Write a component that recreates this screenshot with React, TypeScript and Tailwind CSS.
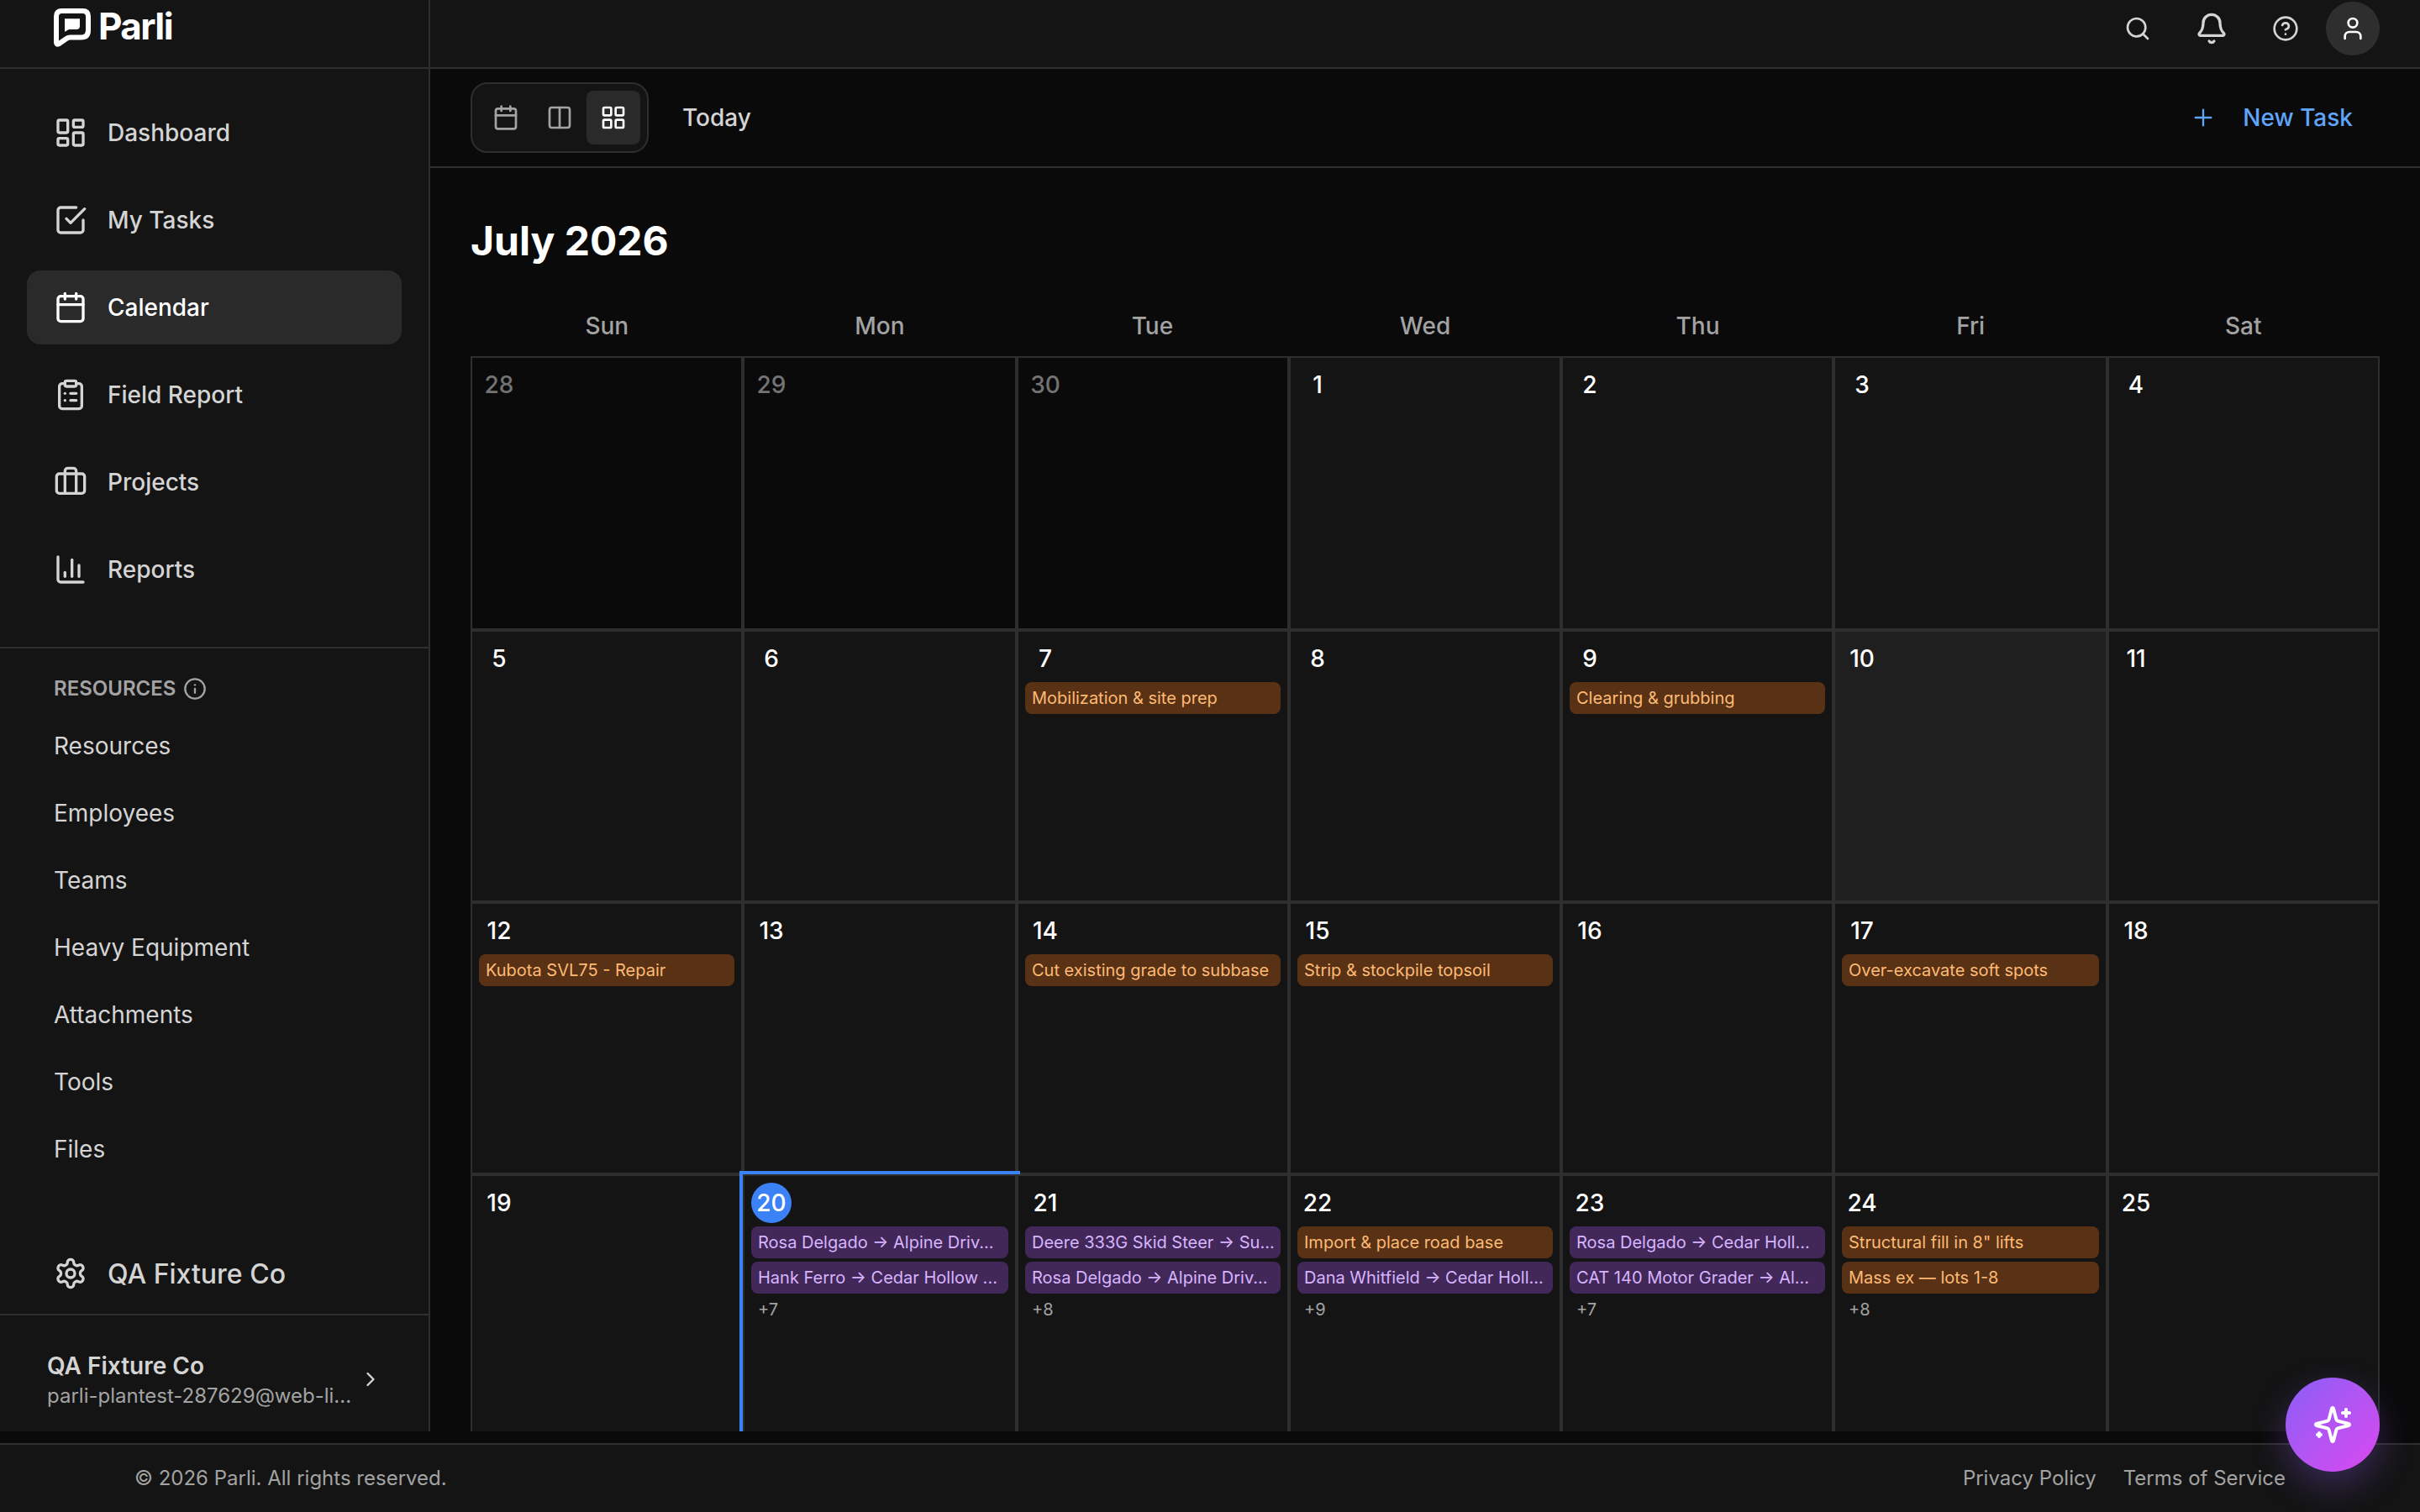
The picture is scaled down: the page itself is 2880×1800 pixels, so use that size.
import React from "react";
import {
  BarChart3,
  Bell,
  Calendar,
  ChevronRight,
  CircleHelp,
  ClipboardList,
  Columns2,
  Info,
  LayoutDashboard,
  LayoutGrid,
  Plus,
  Search,
  User,
} from "lucide-react";

type Tone = "orange" | "purple";
type Entry = { label: string; tone: Tone };
type Day = { n: number; outside?: boolean; hover?: boolean; today?: boolean; events?: Entry[]; more?: string };

const o = (label: string): Entry => ({ label, tone: "orange" });
const p = (label: string): Entry => ({ label, tone: "purple" });

const days: Day[] = [
  { n: 28, outside: true },
  { n: 29, outside: true },
  { n: 30, outside: true },
  { n: 1 },
  { n: 2 },
  { n: 3 },
  { n: 4 },
  { n: 5 },
  { n: 6 },
  { n: 7, events: [o("Mobilization & site prep")] },
  { n: 8 },
  { n: 9, events: [o("Clearing & grubbing")] },
  { n: 10, hover: true },
  { n: 11 },
  { n: 12, events: [o("Kubota SVL75 - Repair")] },
  { n: 13 },
  { n: 14, events: [o("Cut existing grade to subbase")] },
  { n: 15, events: [o("Strip & stockpile topsoil")] },
  { n: 16 },
  { n: 17, events: [o("Over-excavate soft spots")] },
  { n: 18 },
  { n: 19 },
  { n: 20, today: true, events: [p("Rosa Delgado → Alpine Driv..."), p("Hank Ferro → Cedar Hollow ...")], more: "+7" },
  { n: 21, events: [p("Deere 333G Skid Steer → Su..."), p("Rosa Delgado → Alpine Driv...")], more: "+8" },
  { n: 22, events: [o("Import & place road base"), p("Dana Whitfield → Cedar Holl...")], more: "+9" },
  { n: 23, events: [p("Rosa Delgado → Cedar Holl..."), p("CAT 140 Motor Grader → Al...")], more: "+7" },
  { n: 24, events: [o('Structural fill in 8" lifts'), o("Mass ex — lots 1-8")], more: "+8" },
  { n: 25 },
];

const weekdays = ["Sun", "Mon", "Tue", "Wed", "Thu", "Fri", "Sat"];

function TaskIcon() {
  return (
    <svg className="size-10" viewBox="0 0 24 24" fill="none" stroke="currentColor" strokeWidth="2" strokeLinecap="round" strokeLinejoin="round">
      <path d="m9 11 3 3L22 4" />
      <path d="M21 12v7a2 2 0 0 1-2 2H5a2 2 0 0 1-2-2V5a2 2 0 0 1 2-2h11" />
    </svg>
  );
}

function LuggageIcon() {
  return (
    <svg className="size-10" viewBox="0 0 24 24" fill="none" stroke="currentColor" strokeWidth="2" strokeLinecap="round" strokeLinejoin="round">
      <path d="M16 20V4a2 2 0 0 0-2-2h-4a2 2 0 0 0-2 2v16" />
      <rect width="20" height="14" x="2" y="6" rx="2" />
    </svg>
  );
}

function GearIcon() {
  return (
    <svg className="size-10" viewBox="0 0 24 24" fill="none" stroke="currentColor" strokeWidth="2" strokeLinecap="round" strokeLinejoin="round">
      <path d="M12.22 2h-.44a2 2 0 0 0-2 2v.18a2 2 0 0 1-1 1.73l-.43.25a2 2 0 0 1-2 0l-.15-.08a2 2 0 0 0-2.73.73l-.22.38a2 2 0 0 0 .73 2.73l.15.1a2 2 0 0 1 1 1.72v.51a2 2 0 0 1-1 1.74l-.15.09a2 2 0 0 0-.73 2.73l.22.38a2 2 0 0 0 2.73.73l.15-.08a2 2 0 0 1 2 0l.43.25a2 2 0 0 1 1 1.73V20a2 2 0 0 0 2 2h.44a2 2 0 0 0 2-2v-.18a2 2 0 0 1 1-1.73l.43-.25a2 2 0 0 1 2 0l.15.08a2 2 0 0 0 2.73-.73l.22-.39a2 2 0 0 0-.73-2.73l-.15-.08a2 2 0 0 1-1-1.74v-.5a2 2 0 0 1 1-1.74l.15-.09a2 2 0 0 0 .73-2.73l-.22-.38a2 2 0 0 0-2.73-.73l-.15.08a2 2 0 0 1-2 0l-.43-.25a2 2 0 0 1-1-1.73V4a2 2 0 0 0-2-2z" />
      <circle cx="12" cy="12" r="3" />
    </svg>
  );
}

function SparklesIcon() {
  return (
    <svg className="size-12" viewBox="0 0 24 24" fill="none" stroke="currentColor" strokeWidth="2" strokeLinecap="round" strokeLinejoin="round">
      <path d="M9.937 15.5A2 2 0 0 0 8.5 14.063l-6.135-1.582a.5.5 0 0 1 0-.962L8.5 9.936A2 2 0 0 0 9.937 8.5l1.582-6.135a.5.5 0 0 1 .963 0L14.063 8.5A2 2 0 0 0 15.5 9.937l6.135 1.581a.5.5 0 0 1 0 .964L15.5 14.063a2 2 0 0 0-1.437 1.437l-1.582 6.135a.5.5 0 0 1-.963 0z" />
      <path d="M20 3v4M22 5h-4M4 17v2M5 18H3" />
    </svg>
  );
}

function Logo() {
  return (
    <div className="flex items-start text-white">
      <svg className="h-[46px] w-11 shrink-0" viewBox="0 0 44 46" fill="none">
        <path d="M9.5 3H34.5Q41 3 41 9.5V26Q41 34.5 32.5 34.5H19.5Q17 34.5 15 36L6 42.3Q3 43.5 3 40.5V9.5Q3 3 9.5 3Z" stroke="currentColor" strokeWidth="6" strokeLinejoin="round" />
        <path d="M13 12.3H31V21Q31 25 27 25H19Q17.5 25 16.5 25.7L14 27.4Q13 27.8 13 26.8Z" fill="currentColor" />
      </svg>
      <span className="ml-[9px] mt-[-7px] text-[44px] leading-[56px] font-bold tracking-[-1.6px]">Parli</span>
    </div>
  );
}

const nav = [
  { label: "Dashboard", icon: <LayoutDashboard className="size-10" /> },
  { label: "My Tasks", icon: <TaskIcon /> },
  { label: "Calendar", icon: <Calendar className="size-10" />, active: true },
  { label: "Field Report", icon: <ClipboardList className="size-10" /> },
  { label: "Projects", icon: <LuggageIcon /> },
  { label: "Reports", icon: <BarChart3 className="size-10" /> },
];

const resources = ["Resources", "Employees", "Teams", "Heavy Equipment", "Attachments", "Tools", "Files"];

function Sidebar() {
  return (
    <aside className="flex w-[512px] shrink-0 flex-col border-r-2 border-[#2e2e2e] bg-[#141414] text-[#d4d4d4]">
      <div className="h-[82px] shrink-0 border-b-2 border-[#2e2e2e] pt-[10px] pl-16">
        <Logo />
      </div>
      <nav className="flex h-[690px] shrink-0 flex-col gap-4 border-b-2 border-[#2e2e2e] px-8 pt-8 text-[28px] font-medium">
        {nav.map((item) => (
          <a
            key={item.label}
            className={
              item.active
                ? "flex h-[88px] items-center gap-6 rounded-2xl bg-[#2a2a2a] px-8 text-white"
                : "flex h-[88px] items-center gap-6 rounded-2xl px-8"
            }
          >
            {item.icon}
            {item.label}
          </a>
        ))}
      </nav>
      <div className="flex h-24 shrink-0 items-center gap-[9px] pl-16 text-2xl font-semibold text-[#a3a3a3]">
        RESOURCES
        <Info className="size-7" />
      </div>
      <div className="-mt-5 flex flex-1 flex-col pl-16 text-[28px]">
        {resources.map((r) => (
          <a key={r} className="flex h-20 items-center">
            {r}
          </a>
        ))}
      </div>
      <div className="flex h-[98px] shrink-0 items-center gap-6 border-b-2 border-[#2e2e2e] pl-16 text-[32px] font-medium">
        <GearIcon />
        <span className="pt-[2px]">QA Fixture Co</span>
      </div>
      <div className="flex h-[138px] shrink-0 items-center pt-[14px] pl-14">
        <div className="w-[362px] pt-1">
          <div className="text-[28px] leading-[35px] font-semibold">QA Fixture Co</div>
          <div className="text-2xl leading-[36px] whitespace-nowrap text-[#a3a3a3]">parli-plantest-287629@web-li...</div>
        </div>
        <ChevronRight className="ml-[9px] size-7" />
      </div>
    </aside>
  );
}

function TopBar() {
  return (
    <header className="flex h-[82px] shrink-0 justify-end border-b-2 border-[#2e2e2e] bg-[#141414] pt-[2px] pr-12 text-[#d4d4d4]">
      <div className="grid h-16 grid-cols-[88px_88px_88px] items-center justify-items-center">
        <Search className="size-8" />
        <Bell className="size-10" />
        <CircleHelp className="size-8" />
      </div>
      <div className="ml-1 flex size-16 items-center justify-center rounded-full bg-[#2e2e2e] text-white">
        <User className="size-8" />
      </div>
    </header>
  );
}

function Toolbar() {
  return (
    <div className="flex h-[118px] shrink-0 items-center border-b-2 border-[#2e2e2e] px-12 text-[28px] font-medium">
      <div className="flex rounded-[20px] border-2 border-[#2e2e2e] bg-[#141414] p-2 text-[#a3a3a3]">
        <div className="flex size-16 items-center justify-center">
          <Calendar className="size-8" />
        </div>
        <div className="flex size-16 items-center justify-center">
          <Columns2 className="size-8" />
        </div>
        <div className="flex size-16 items-center justify-center rounded-lg bg-[#2a2a2a] text-white">
          <LayoutGrid className="size-8" />
        </div>
      </div>
      <span className="ml-10 text-[#d4d4d4]">Today</span>
      <button className="mr-8 ml-auto flex items-center gap-[31px] text-[#60a5fa]">
        <Plus className="size-8" strokeWidth={1.75} />
        New Task
      </button>
    </div>
  );
}

function DayCell({ day }: { day: Day }) {
  const cell = day.outside
    ? "bg-[#0a0a0a] text-[#737373]"
    : day.hover
      ? "bg-[#1f1f1f] text-white"
      : day.today
        ? "bg-[#141414] text-white ring-4 ring-[#3b82f6]"
        : "bg-[#141414] text-white";
  return (
    <div className={`min-w-0 border-2 border-[#2e2e2e] p-2 ${cell}`}>
      <div
        className={
          day.today
            ? "flex size-12 items-center justify-center rounded-full bg-[#3b82f6] text-[28px] font-medium"
            : "flex size-12 items-center justify-center text-[28px] font-medium"
        }
      >
        {day.n}
      </div>
      <div className="mt-1 flex flex-col gap-1 text-xl leading-[30px]">
        {day.events?.map((e) => (
          <div
            key={e.label}
            className={
              e.tone === "orange"
                ? "overflow-hidden rounded-lg bg-[#593115] px-2 py-1 whitespace-nowrap text-[#fdba74]"
                : "overflow-hidden rounded-lg bg-[#412859] px-2 py-1 whitespace-nowrap text-[#d8b4fe]"
            }
          >
            {e.label}
          </div>
        ))}
        {day.more && <div className="px-2 text-[#a3a3a3]">{day.more}</div>}
      </div>
    </div>
  );
}

export default function App() {
  return (
    <div className="relative flex h-[1800px] w-[2880px] flex-col overflow-hidden bg-[#0a0a0a] font-['Inter',sans-serif]">
      <div className="flex h-[1704px] shrink-0 overflow-hidden">
        <Sidebar />
        <div className="flex min-w-0 flex-1 flex-col">
          <TopBar />
          <Toolbar />
          <main className="flex min-h-0 flex-1 flex-col overflow-hidden px-12">
            <h1 className="mt-[59px] text-5xl leading-[56px] font-bold text-white">July 2026</h1>
            <div className="mt-[37px] grid h-[72px] shrink-0 grid-cols-7 items-center text-center text-[28px] font-medium text-[#a3a3a3]">
              {weekdays.map((w) => (
                <div key={w}>{w}</div>
              ))}
            </div>
            <div className="grid shrink-0 grid-cols-[324px_326px_324px_324px_324px_326px_324px] grid-rows-[326px_324px_324px_324px]">
              {days.map((d, i) => (
                <DayCell key={i} day={d} />
              ))}
            </div>
          </main>
        </div>
      </div>
      <footer className="mt-[14px] flex flex-1 items-center justify-between border-t-2 border-[#2e2e2e] bg-[#141414] px-40 text-2xl text-[#a3a3a3]">
        <span>© 2026 Parli. All rights reserved.</span>
        <div className="flex gap-8">
          <span>Privacy Policy</span>
          <span>Terms of Service</span>
        </div>
      </footer>
      <button className="absolute right-12 bottom-12 flex size-28 items-center justify-center rounded-full bg-gradient-to-br from-[#8b5cf6] to-[#d946ef] text-white shadow-[0_16px_40px_rgba(139,92,246,0.3)]">
        <SparklesIcon />
      </button>
    </div>
  );
}
